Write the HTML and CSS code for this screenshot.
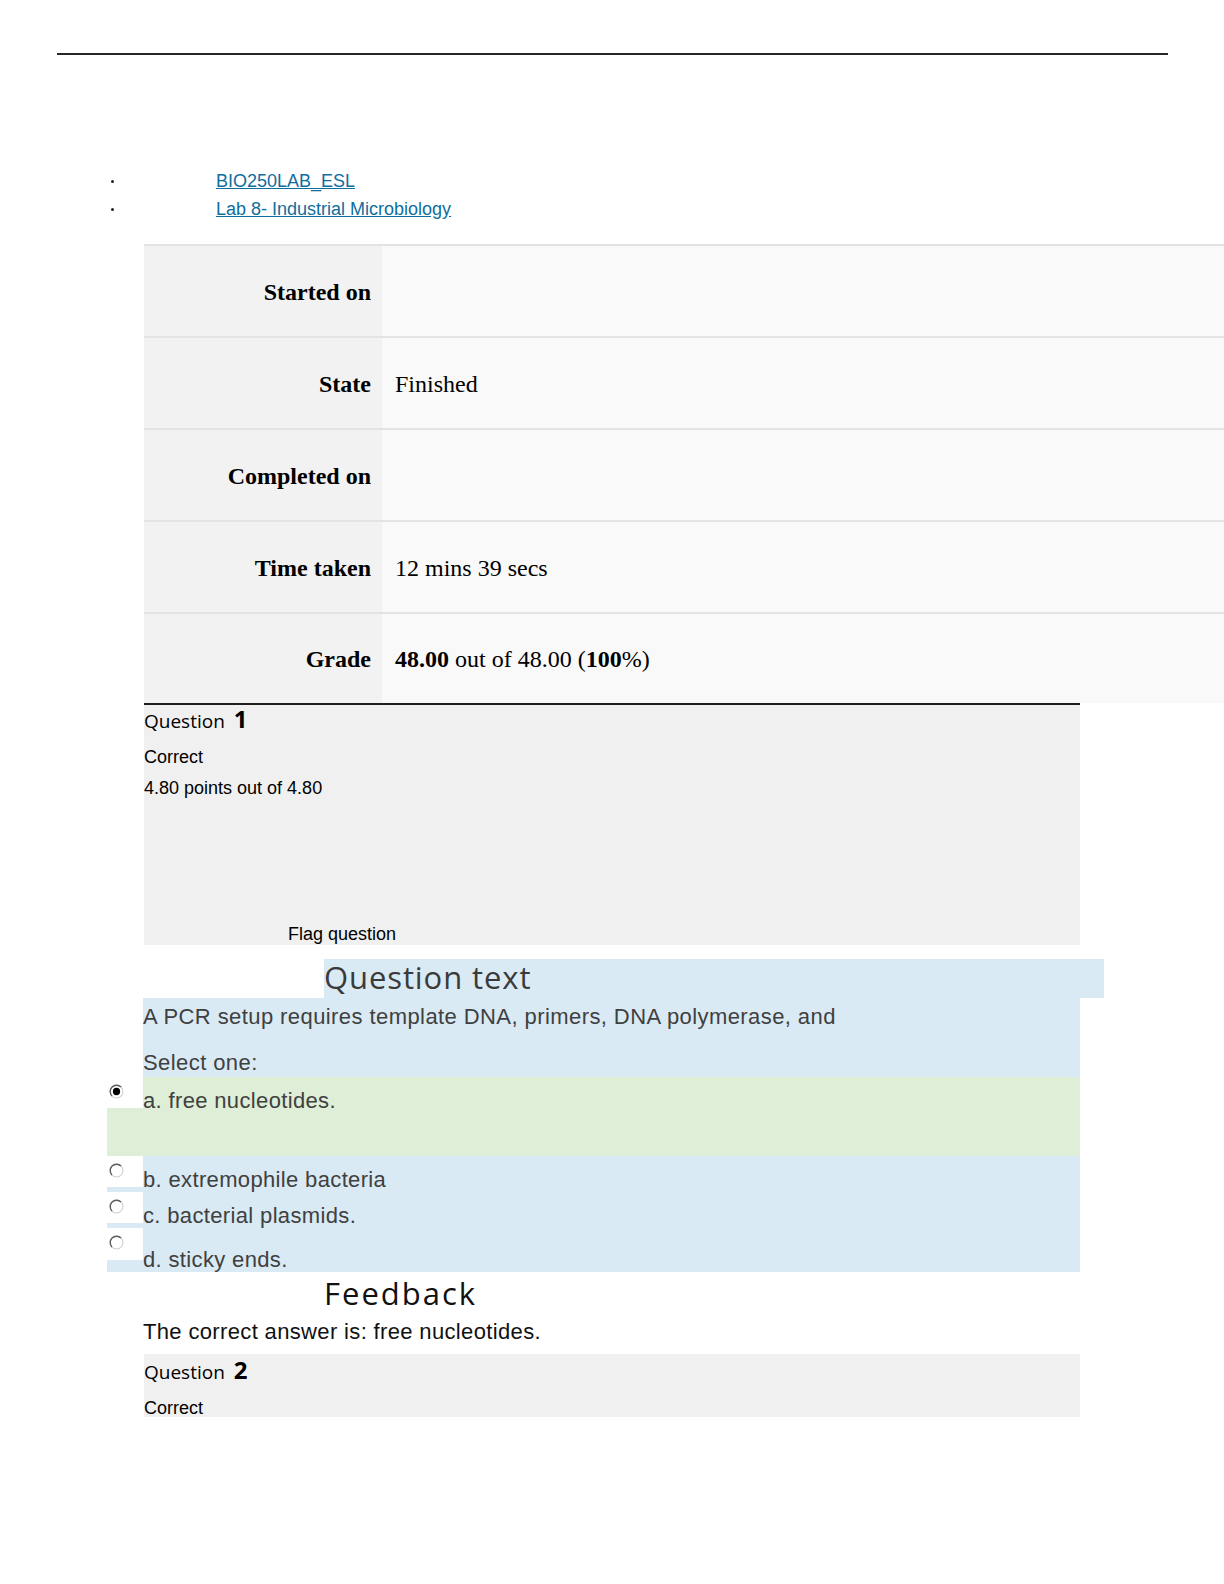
FILE: index.html
```html
<!DOCTYPE html>
<html lang="en">
<head>
<meta charset="utf-8">
<title>Lab 8- Industrial Microbiology: Review</title>
<link rel="stylesheet" href="styles.css">
</head>
<body>
<div class="rule"></div>

<ul class="crumbs">
  <li><span class="dot"></span><a href="#">BIO250LAB_ESL</a></li>
  <li><span class="dot"></span><a href="#">Lab 8- Industrial Microbiology</a></li>
</ul>

<div class="summary">
  <div class="row"><div class="th">Started on</div><div class="td"></div></div>
  <div class="row"><div class="th">State</div><div class="td">Finished</div></div>
  <div class="row"><div class="th">Completed on</div><div class="td"></div></div>
  <div class="row"><div class="th">Time taken</div><div class="td">12 mins 39 secs</div></div>
  <div class="row last"><div class="th">Grade</div><div class="td"><b>48.00</b>&nbsp;out of 48.00 (<b>100</b>%)</div></div>
</div>

<div class="info">
  <h3 class="qno">Question <span class="num">1</span></h3>
  <div class="state">Correct</div>
  <div class="grade">4.80 points out of 4.80</div>
  <div class="flag">Flag question</div>
</div>

<h4 class="qtext-title">Question text</h4>
<div class="formulation">
  <p class="qtext">A PCR setup requires template DNA, primers, DNA polymerase, and</p>
  <p class="prompt">Select one:</p>
</div>

<div class="answer">
  <div class="opt correct opt-a">
    <div class="rcell"><span class="rbox">
      <svg class="radio" width="15" height="15" viewBox="0 0 14 14">
        <circle cx="7" cy="7" r="6" fill="#fff" stroke="#cfcfcf" stroke-width="1"/>
        <path d="M2.76 11.24 A6 6 0 0 1 11.24 2.76" fill="none" stroke="#5e5e5e" stroke-width="1.3"/>
        <circle cx="7" cy="7" r="3.4" fill="#000"/>
      </svg>
    </span></div>
    <div class="label">a. free nucleotides.</div>
  </div>
  <div class="opt opt-b">
    <div class="rcell"><span class="rbox">
      <svg class="radio" width="15" height="15" viewBox="0 0 14 14">
        <circle cx="7" cy="7" r="6" fill="#fff" stroke="#cfcfcf" stroke-width="1"/>
        <path d="M2.76 11.24 A6 6 0 0 1 11.24 2.76" fill="none" stroke="#5e5e5e" stroke-width="1.3"/>
      </svg>
    </span></div>
    <div class="label">b. extremophile bacteria</div>
  </div>
  <div class="opt opt-c">
    <div class="rcell"><span class="rbox">
      <svg class="radio" width="15" height="15" viewBox="0 0 14 14">
        <circle cx="7" cy="7" r="6" fill="#fff" stroke="#cfcfcf" stroke-width="1"/>
        <path d="M2.76 11.24 A6 6 0 0 1 11.24 2.76" fill="none" stroke="#5e5e5e" stroke-width="1.3"/>
      </svg>
    </span></div>
    <div class="label">c. bacterial plasmids.</div>
  </div>
  <div class="opt opt-d">
    <div class="rcell"><span class="rbox">
      <svg class="radio" width="15" height="15" viewBox="0 0 14 14">
        <circle cx="7" cy="7" r="6" fill="#fff" stroke="#cfcfcf" stroke-width="1"/>
        <path d="M2.76 11.24 A6 6 0 0 1 11.24 2.76" fill="none" stroke="#5e5e5e" stroke-width="1.3"/>
      </svg>
    </span></div>
    <div class="label">d. sticky ends.</div>
  </div>
</div>

<h4 class="fb-title">Feedback</h4>
<p class="rightanswer">The correct answer is: free nucleotides.</p>

<div class="info info2">
  <h3 class="qno">Question <span class="num">2</span></h3>
  <div class="state">Correct</div>
</div>
</body>
</html>
```

FILE: styles.css
```css
body {
  margin: 0;
  background: #fff;
  color: #000;
  font-family: "Liberation Sans", Arial, sans-serif;
}

.rule {
  margin: 53px 0 0 57px;
  width: 1111px;
  height: 2px;
  background: #262626;
}

.crumbs {
  list-style: none;
  margin: 112px 0 0;
  padding: 0;
}
.crumbs li {
  display: flex;
  align-items: center;
  height: 28px;
  font-size: 18px;
}
.crumbs .dot {
  width: 3px;
  height: 3px;
  border-radius: 50%;
  background: #222;
  margin: 0 102px 0 111px;
}
.crumbs a {
  color: #0f6e9e;
  text-decoration: underline;
}

.summary {
  margin: 21px 0 0 144px;
  width: 1080px;
}
.row {
  display: grid;
  grid-template-columns: 238px 1fr;
  border-top: 2px solid #e3e3e3;
  height: 90px;
}
.row.last {
  height: 89px;
}
.th {
  background: #f2f2f2;
  display: flex;
  align-items: center;
  justify-content: flex-end;
  padding-right: 11px;
  padding-top: 2px;
  font: bold 24px "Liberation Serif", "Times New Roman", serif;
}
.td {
  background: #f9f9f9;
  display: flex;
  align-items: center;
  padding-left: 13px;
  padding-top: 2px;
  font: 24px "Liberation Serif", "Times New Roman", serif;
  white-space: pre;
}

.info {
  margin-left: 144px;
  width: 936px;
  border-top: 2px solid #1e1e1e;
  background: #f0f0f0;
  height: 240px;
}
.qno {
  margin: 0;
  padding-top: 2px;
  height: 28px;
  font: 400 19px "Open Sans", sans-serif;
  line-height: 24px;
}
.qno .num {
  font-size: 24px;
  font-weight: 700;
  line-height: 24px;
  margin-left: 4px;
}
.state {
  margin-top: 12px;
  font-size: 18px;
  line-height: 20px;
}
.grade {
  margin-top: 11px;
  font-size: 18px;
  line-height: 20px;
}
.flag {
  margin: 126px 0 0 144px;
  font-size: 18px;
  line-height: 20px;
}

.qtext-title {
  margin: 14px 0 0 324px;
  width: 780px;
  height: 39px;
  background: #d9eaf4;
  font: 400 31px "Open Sans", sans-serif;
  line-height: 36px;
  letter-spacing: 0.9px;
  color: #3a3a3a;
}

.formulation {
  margin-left: 143px;
  width: 937px;
  background: #d9eaf4;
  padding: 7px 0 2px;
  color: #404040;
}
.formulation p {
  margin: 0;
  font-size: 22px;
  line-height: 24px;
  letter-spacing: 0.42px;
}
.formulation .prompt {
  margin-top: 22px;
}

.answer {
  margin-left: 107px;
  width: 973px;
}
.opt {
  display: grid;
  grid-template-columns: 36px 1fr;
  background: #d9eaf4;
}
.opt.correct {
  background: #deeed7;
}
.rbox {
  display: block;
  height: 31px;
  background: #fff;
  padding: 7px 0 0 2px;
  box-sizing: border-box;
}
.radio {
  display: block;
}
.label {
  font-size: 22px;
  line-height: 24px;
  letter-spacing: 0.35px;
  color: #404040;
}
.opt-a { height: 79px; }
.opt-a .label { padding-top: 12px; }
.opt-b { height: 36px; }
.opt-b .label { padding-top: 12px; }
.opt-c { height: 36px; }
.opt-c .label { padding-top: 12px; }
.opt-d { height: 44px; }
.opt-d .rbox { height: 32px; }
.opt-d .label { padding-top: 20px; }

.fb-title {
  margin: 3px 0 0 324px;
  font: 400 31px "Open Sans", sans-serif;
  line-height: 36px;
  letter-spacing: 2px;
  color: #111;
}
.rightanswer {
  margin: 9px 0 0 143px;
  font-size: 22px;
  line-height: 24px;
  letter-spacing: 0.35px;
  color: #111;
}

.info2 {
  margin-top: 10px;
  border-top: none;
  height: 63px;
  overflow: hidden;
}
.info2 .qno {
  padding-top: 4px;
}
```
